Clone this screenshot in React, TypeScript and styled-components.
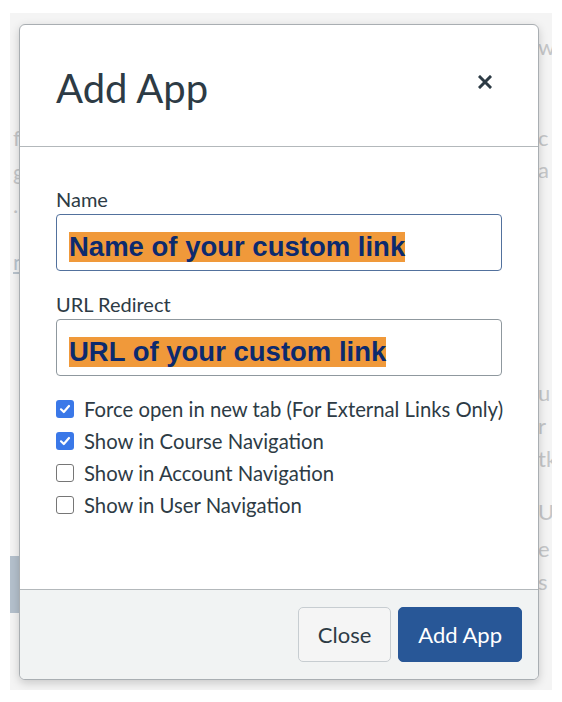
import React from "react";
import styled, { createGlobalStyle } from "styled-components";

const GlobalStyle = createGlobalStyle`
  html, body {
    margin: 0;
    padding: 0;
    background: #ffffff;
  }
  body {
    font-family: Lato, "Noto Sans", sans-serif;
  }
`;

const Stage = styled.div`
  position: relative;
  margin: 13px 0 0 10px;
  width: 542px;
  height: 677px;
  background: #f4f4f4;
  overflow: hidden;
`;

// faded page that sits behind the dialog
const BgPage = styled.div`
  display: flex;
  justify-content: space-between;
  height: 100%;
  color: #c4c6c8;
  font-size: 22px;
`;

const BgColumn = styled.div<{ $right?: boolean }>`
  display: flex;
  flex-direction: column;
  width: ${(p) => (p.$right ? "14px" : "12px")};
  padding-left: ${(p) => (p.$right ? "0" : "3px")};
  white-space: nowrap;
`;

const BgLine = styled.div<{ $top: number; $link?: boolean }>`
  margin-top: ${(p) => p.$top}px;
  height: 32px;
  line-height: 32px;
  color: ${(p) => (p.$link ? "#b9c3cd" : "inherit")};
  text-decoration: ${(p) => (p.$link ? "underline" : "none")};
`;

const BgBlock = styled.div`
  margin-top: auto;
  margin-bottom: 77px;
  margin-left: -3px;
  width: 12px;
  height: 57px;
  background: #b4c0cc;
`;

const Dialog = styled.div`
  position: absolute;
  left: 9px;
  top: 11px;
  width: 520px;
  height: 656px;
  box-sizing: border-box;
  display: flex;
  flex-direction: column;
  background: #ffffff;
  border: 1px solid #a9aeb2;
  border-radius: 6px;
  box-shadow: 0 3px 10px rgba(0, 0, 0, 0.18);
  overflow: hidden;
`;

const Header = styled.div`
  display: flex;
  align-items: center;
  justify-content: space-between;
  height: 122px;
  padding: 4px 46px 0 36px;
  box-sizing: border-box;
  border-bottom: 1px solid #b3b8bb;
`;

const Title = styled.h1`
  margin: 0;
  font-family: Lato, "Noto Sans", sans-serif;
  font-weight: 400;
  font-size: 40px;
  color: #2d3b45;
`;

const CloseX = styled.button`
  display: flex;
  padding: 0;
  border: 0;
  background: none;
  color: #2d3b45;
  margin-bottom: 12px;
`;

const Body = styled.div`
  flex: 1;
  padding: 40px 36px 0;
  display: flex;
  flex-direction: column;
`;

const Field = styled.div<{ $gap: number }>`
  display: flex;
  flex-direction: column;
  margin-bottom: ${(p) => p.$gap}px;
`;

const Label = styled.label`
  font-size: 20px;
  line-height: 24px;
  color: #2d3b45;
  margin-bottom: 3px;
`;

const TextBox = styled.div<{ $focused?: boolean }>`
  height: 57px;
  box-sizing: border-box;
  border: 1px solid ${(p) => (p.$focused ? "#52719d" : "#8f989e")};
  border-radius: 4px;
  padding: 17px 0 0 12px;
`;

const Highlight = styled.span`
  display: inline-block;
  background: #f0993a;
  color: #0c2a6e;
  font-family: "Liberation Sans", Arial, sans-serif;
  font-weight: 700;
  font-size: 27.5px;
  line-height: 30px;
`;

const Checks = styled.div`
  display: flex;
  flex-direction: column;
`;

const CheckRow = styled.label`
  display: flex;
  align-items: center;
  height: 32px;
  gap: 10px;
  font-size: 20.3px;
  color: #2d3b45;
  white-space: nowrap;
`;

const Box = styled.span<{ $on?: boolean }>`
  display: flex;
  align-items: center;
  justify-content: center;
  flex-shrink: 0;
  width: 18px;
  height: 18px;
  box-sizing: border-box;
  border-radius: 3px;
  background: ${(p) => (p.$on ? "#3a78e8" : "#ffffff")};
  border: ${(p) => (p.$on ? "none" : "1px solid #767676")};
`;

const Footer = styled.div`
  display: flex;
  justify-content: flex-end;
  align-items: center;
  gap: 7px;
  height: 90px;
  padding: 0 16px 0 0;
  box-sizing: border-box;
  background: #f1f3f3;
  border-top: 1px solid #b3b8bb;
`;

const Button = styled.button<{ $primary?: boolean }>`
  height: 55px;
  padding: 0 19px;
  border-radius: 5px;
  font-family: Lato, "Noto Sans", sans-serif;
  font-size: 22px;
  color: ${(p) => (p.$primary ? "#ffffff" : "#2d3b45")};
  background: ${(p) => (p.$primary ? "#285797" : "#f5f5f5")};
  border: 1px solid ${(p) => (p.$primary ? "#285797" : "#c7cdd1")};
`;

const Check = () => (
  <svg width="12" height="12" viewBox="0 0 12 12">
    <path d="M2 6.3 L4.8 9 L10 3" fill="none" stroke="#fff" strokeWidth="2.2" strokeLinecap="round" strokeLinejoin="round" />
  </svg>
);

const options = [
  { text: "Force open in new tab (For External Links Only)", on: true },
  { text: "Show in Course Navigation", on: true },
  { text: "Show in Account Navigation", on: false },
  { text: "Show in User Navigation", on: false },
];

export default function App() {
  return (
    <>
      <GlobalStyle />
      <Stage>
        <BgPage>
          <BgColumn>
            <BgLine $top={109}>f</BgLine>
            <BgLine $top={2}>g</BgLine>
            <BgLine $top={1}>.</BgLine>
            <BgLine $top={25} $link>nt</BgLine>
            <BgBlock />
          </BgColumn>
          <BgColumn $right>
            <BgLine $top={18}>w</BgLine>
            <BgLine $top={59}>c</BgLine>
            <BgLine $top={0}>a</BgLine>
            <BgLine $top={191}>u</BgLine>
            <BgLine $top={1}>r</BgLine>
            <BgLine $top={1}>tk</BgLine>
            <BgLine $top={21}>UI</BgLine>
            <BgLine $top={5}>e</BgLine>
            <BgLine $top={1}>s</BgLine>
          </BgColumn>
        </BgPage>

        <Dialog role="dialog" aria-label="Add App">
          <Header>
            <Title>Add App</Title>
            <CloseX aria-label="Close">
              <svg width="14" height="14" viewBox="0 0 14 14">
                <path d="M2 2 L12 12 M12 2 L2 12" stroke="#2d3b45" strokeWidth="3" strokeLinecap="square" />
              </svg>
            </CloseX>
          </Header>
          <Body>
            <Field $gap={21}>
              <Label>Name</Label>
              <TextBox $focused>
                <Highlight>Name of your custom link</Highlight>
              </TextBox>
            </Field>
            <Field $gap={17}>
              <Label>URL Redirect</Label>
              <TextBox>
                <Highlight>URL of your custom link</Highlight>
              </TextBox>
            </Field>
            <Checks>
              {options.map((o) => (
                <CheckRow key={o.text}>
                  <Box $on={o.on}>{o.on && <Check />}</Box>
                  {o.text}
                </CheckRow>
              ))}
            </Checks>
          </Body>
          <Footer>
            <Button>Close</Button>
            <Button $primary>Add App</Button>
          </Footer>
        </Dialog>
      </Stage>
    </>
  );
}
